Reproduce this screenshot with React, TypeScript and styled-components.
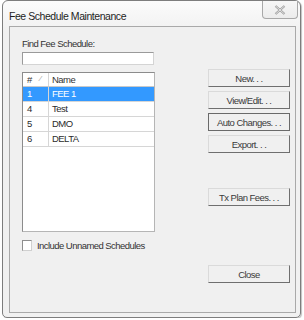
import styled, { createGlobalStyle } from 'styled-components';

const GlobalStyle = createGlobalStyle`
  body {
    margin: 0;
    background: #ffffff;
    font-family: "Liberation Sans", Arial, sans-serif;
    font-size: 9.5px;
    letter-spacing: -0.55px;
    color: #2b2b2b;
  }
`;

const SCHEDULES = [
  { id: 1, name: 'FEE 1' },
  { id: 4, name: 'Test' },
  { id: 5, name: 'DMO' },
  { id: 6, name: 'DELTA' },
];

const ACTIONS_TOP = ['New. . .', 'View/Edit. . .', 'Auto Changes. . .', 'Export. . .'];

function App() {
  return (
    <>
      <GlobalStyle />
      <StyledWindow>
        <StyledTitleBar>
          <StyledTitle>Fee Schedule Maintenance</StyledTitle>
          <StyledCloseButton>
            <svg width="12" height="10" viewBox="0 0 12 10">
              <path
                d="M1.5 1 L10.5 9 M10.5 1 L1.5 9"
                stroke="#9a9a9a"
                strokeWidth="2.2"
                fill="none"
              />
              <path
                d="M1.5 1 L10.5 9 M10.5 1 L1.5 9"
                stroke="#f4f4f4"
                strokeWidth="0.8"
                fill="none"
              />
            </svg>
          </StyledCloseButton>
        </StyledTitleBar>
        <StyledClient>
          <StyledLeftColumn>
            <StyledLabel>Find Fee Schedule:</StyledLabel>
            <StyledInput />
            <StyledList>
              <StyledHeaderRow>
                <StyledNumCell>
                  #<StyledSort>⁄</StyledSort>
                </StyledNumCell>
                <StyledNameCell>Name</StyledNameCell>
              </StyledHeaderRow>
              {SCHEDULES.map((s, i) => (
                <StyledRow key={s.id} selected={i === 0}>
                  <StyledNumCell>{s.id}</StyledNumCell>
                  <StyledNameCell>{s.name}</StyledNameCell>
                </StyledRow>
              ))}
            </StyledList>
            <StyledCheckRow>
              <StyledCheckbox />
              <span>Include Unnamed Schedules</span>
            </StyledCheckRow>
          </StyledLeftColumn>
          <StyledRightColumn>
            {ACTIONS_TOP.map((label) => (
              <StyledButton key={label} focused={label.startsWith('Auto')}>
                {label}
              </StyledButton>
            ))}
            <StyledButton spaced={35}>Tx Plan Fees. . .</StyledButton>
            <StyledButton spaced={59}>Close</StyledButton>
          </StyledRightColumn>
        </StyledClient>
      </StyledWindow>
    </>
  );
}

const StyledWindow = styled.div`
  box-sizing: border-box;
  width: 299px;
  height: 318px;
  margin-left: 2px;
  border: 1px solid #7d7d7d;
  border-radius: 6px 6px 5px 5px;
  background: linear-gradient(#fbfbfb, #f1f1f1 30px, #f1f1f1);
  display: flex;
  flex-direction: column;
  box-shadow: 1px 1px 1px rgba(0, 0, 0, 0.25);
`;

const StyledTitleBar = styled.div`
  height: 25px;
  display: flex;
  justify-content: space-between;
  align-items: flex-start;
  padding-left: 6px;
  padding-right: 2px;
`;

const StyledTitle = styled.div`
  margin-top: 9px;
  font-size: 10.5px;
  letter-spacing: -0.45px;
  color: #1e1e1e;
`;

const StyledCloseButton = styled.div`
  box-sizing: border-box;
  width: 36px;
  height: 18px;
  border: 1px solid #a8a8a8;
  border-top: none;
  border-radius: 0 0 4px 4px;
  background: linear-gradient(#f7f7f7, #ececec);
  display: flex;
  align-items: center;
  justify-content: center;
`;

const StyledClient = styled.div`
  flex: 1;
  margin: 0 4px 4px 6px;
  border: 1px solid #a9a9a9;
  background: #f0f0f0;
  display: flex;
  justify-content: space-between;
  padding: 11px 5px 0 12px;
`;

const StyledLeftColumn = styled.div`
  width: 133px;
  display: flex;
  flex-direction: column;
`;

const StyledLabel = styled.div`
  line-height: 12px;
  color: #333;
`;

const StyledInput = styled.div`
  box-sizing: border-box;
  margin-top: 2px;
  width: 132px;
  height: 13px;
  background: #fff;
  border: 1px solid #9a9a9a;
  border-right-color: #d4d4d4;
  border-bottom-color: #d4d4d4;
`;

const StyledList = styled.div`
  box-sizing: border-box;
  margin-top: 7px;
  width: 133px;
  height: 160px;
  background: #fff;
  border: 1px solid #8c8c8c;
  border-right-color: #b5b5b5;
  border-bottom-color: #b5b5b5;
`;

const StyledHeaderRow = styled.div`
  display: flex;
  height: 13px;
  line-height: 13px;
  border-bottom: 1px solid #c9c9c9;
  color: #333;
`;

const StyledRow = styled.div<{ selected?: boolean }>`
  display: flex;
  height: 14px;
  line-height: 14px;
  border-bottom: 1px solid #d6d6d6;
  background: ${({ selected }) => (selected ? '#3399ff' : '#fff')};
  color: ${({ selected }) => (selected ? '#ffffff' : '#2b2b2b')};
`;

const StyledNumCell = styled.div`
  width: 26px;
  padding-left: 4px;
  box-sizing: border-box;
  border-right: 1px solid #d6d6d6;
  position: relative;
`;

const StyledSort = styled.span`
  position: absolute;
  left: 17px;
  top: -1px;
  font-size: 8px;
  color: #9a9a9a;
`;

const StyledNameCell = styled.div`
  padding-left: 3px;
`;

const StyledCheckRow = styled.div`
  margin-top: 8px;
  display: flex;
  align-items: center;
  gap: 5px;
  color: #333;
  white-space: nowrap;
`;

const StyledCheckbox = styled.div`
  box-sizing: border-box;
  flex: none;
  width: 10px;
  height: 11px;
  background: #fff;
  border: 1px solid #8e8e8e;
  border-right-color: #d0d0d0;
  border-bottom-color: #d0d0d0;
`;

const StyledRightColumn = styled.div`
  width: 82px;
  margin-top: 31px;
  display: flex;
  flex-direction: column;
  gap: 4px;
`;

const StyledButton = styled.div<{ focused?: boolean; spaced?: number }>`
  box-sizing: border-box;
  height: 18px;
  display: flex;
  align-items: center;
  justify-content: center;
  white-space: nowrap;
  background: #f0f0f0;
  color: #3a3a3a;
  border: 1px solid #dadada;
  border-right-color: #6f6f6f;
  border-bottom-color: #6f6f6f;
  ${({ focused }) => focused && 'border-color: #6a6a6a;'}
  ${({ spaced }) => spaced && `margin-top: ${spaced - 4}px;`}
`;

export default App;
